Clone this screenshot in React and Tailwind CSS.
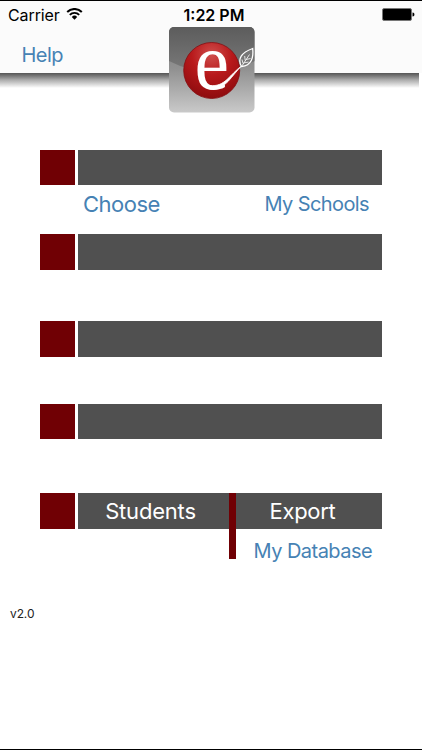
function WifiIcon() {
  return (
    <svg width="17" height="13" viewBox="0 0 17 13" fill="none">
      <path d="M1.2 4a10.3 10.3 0 0 1 14.6 0" stroke="#000" strokeWidth="2" />
      <path d="M3.8 6.8a6.6 6.6 0 0 1 9.4 0" stroke="#000" strokeWidth="1.9" />
      <path d="M5.8 8.9a3.8 3.8 0 0 1 5.4 0L8.5 11.7z" fill="#000" />
    </svg>
  );
}

function BatteryIcon() {
  return (
    <svg width="33" height="13" viewBox="0 0 33 13">
      <rect x="0.5" y="0.5" width="29" height="12" rx="1.6" fill="#000" stroke="#777" />
      <path d="M30.5 4.5c1.6.3 1.9 1 1.9 2s-.3 1.7-1.9 2z" fill="#000" />
    </svg>
  );
}

function Logo() {
  return (
    <svg className="block" width="86" height="86" viewBox="0 0 86 86">
      <defs>
        <linearGradient id="tile" x1="0" y1="0" x2="0" y2="1">
          <stop offset="0" stopColor="#747474" />
          <stop offset="0.5" stopColor="#929292" />
          <stop offset="1" stopColor="#cacaca" />
        </linearGradient>
        <linearGradient id="gloss" x1="0" y1="0" x2="0" y2="1">
          <stop offset="0" stopColor="#5c5c5c" />
          <stop offset="1" stopColor="#7a7a7a" />
        </linearGradient>
        <radialGradient id="ball" cx="0.5" cy="0.22" r="0.8">
          <stop offset="0" stopColor="#cf4f4d" />
          <stop offset="0.45" stopColor="#b8191b" />
          <stop offset="1" stopColor="#8c0b0e" />
        </radialGradient>
        <clipPath id="tileClip">
          <rect width="85.5" height="85.5" rx="5" />
        </clipPath>
      </defs>
      <g clipPath="url(#tileClip)">
        <rect width="86" height="86" fill="url(#tile)" />
        <path d="M0 0h86v34Q43 56 0 34z" fill="url(#gloss)" />
      </g>
      <circle cx="42.7" cy="43.5" r="28" fill="url(#ball)" stroke="#850d10" strokeWidth="0.8" />
      <text
        x="25.5"
        y="61.5"
        fontSize="80"
        fill="#fff"
        textLength="34.5"
        lengthAdjust="spacingAndGlyphs"
        className="font-['Liberation_Serif',serif]"
      >
        e
      </text>
      {/* tail of the letter running up to the leaf */}
      <path
        d="M41 58.500c7 .8 12-1.500 17-6 5-4.700 9-9.500 14.500-13.500-5 5-8.500 10-13.500 15.500-5 5-11 8.500-18 7.500z"
        fill="#fff"
        stroke="#fff"
        strokeWidth="0.8"
      />
      <path
        d="M72.500 39.500c-4.500-7.500 0-14 11.200-18 1 9-1 17-11.200 18z"
        fill="#777"
        stroke="#fff"
        strokeWidth="1.3"
      />
      <path
        d="M72.500 39.500l8-12M74 36.500l-1-4M76.200 33.500l-.5-4.500M74.500 36l5-1M77 32.500l4.500-1"
        fill="none"
        stroke="#fff"
        strokeWidth="0.8"
      />
    </svg>
  );
}

function Bar({ children }) {
  return (
    <div className="flex h-[35.5px] shrink-0 gap-[3px] pl-[39.5px] pr-10">
      <div className="w-[35.5px] bg-[#700004]" />
      <div className="flex flex-1 items-center bg-[#505050] text-[22px] text-white">
        {children}
      </div>
    </div>
  );
}

function App() {
  return (
    <div className="flex h-[750px] w-[422px] flex-col overflow-hidden border-y border-black bg-white font-[Inter,sans-serif]">
      <header className="relative h-[72px] shrink-0 bg-[#fbfbfb]">
        <div className="flex h-[27px] items-center justify-between pl-2 pr-[7px] text-[16px] leading-[20px]">
          <div className="flex w-[120px] items-center gap-[7px]">
            <span className="w-[51px] tracking-[-0.1px]">Carrier</span>
            <WifiIcon />
          </div>
          <span className="ml-[5px] whitespace-nowrap font-semibold">1:22 PM</span>
          <div className="flex w-[120px] justify-end">
            <BatteryIcon />
          </div>
        </div>
        <button className="ml-[21.5px] mt-[12px] block text-[20px] leading-[30px] tracking-[-0.5px] text-[#4682b4]">
          Help
        </button>
        <div className="absolute left-[168.5px] top-[26px]">
          <Logo />
        </div>
      </header>
      <div className="mr-[3px] h-[15px] shrink-0 bg-linear-to-b from-[#555] via-[#aaa] via-45% to-white" />

      <main className="flex flex-1 flex-col pt-[61.5px]">
        <Bar />
        <div className="flex h-[49px] shrink-0 items-start justify-between pl-[83px] pr-[53px] pt-[4px] text-[#4682b4]">
          <button className="text-[22px] leading-[30px] tracking-[-0.5px]">Choose</button>
          <button className="text-[20px] leading-[30px] tracking-[-0.6px]">My Schools</button>
        </div>
        <Bar />
        <div className="h-[51.5px] shrink-0" />
        <Bar />
        <div className="h-[47px] shrink-0" />
        <Bar />
        <div className="h-[54px] shrink-0" />
        <div className="relative">
          <Bar>
            <button className="w-[145px] pt-[2px] text-center tracking-[-0.2px]">Students</button>
            <button className="ml-[15px] w-[129px] pt-[2px] text-center tracking-[-0.3px]">Export</button>
          </Bar>
          {/* divider hangs below the bar */}
          <div className="absolute left-[229px] top-0 h-[66px] w-[7px] bg-[#700004]" />
        </div>
        <div className="flex justify-end pr-[50px] pt-[7px]">
          <button className="text-[20px] leading-[30px] tracking-[-0.55px] text-[#4682b4]">
            My Database
          </button>
        </div>
        <p className="mt-[40px] pl-[10px] text-[12px] leading-[16px] tracking-[-0.1px] text-[#222]">v2.0</p>
      </main>
    </div>
  );
}

export default App;
